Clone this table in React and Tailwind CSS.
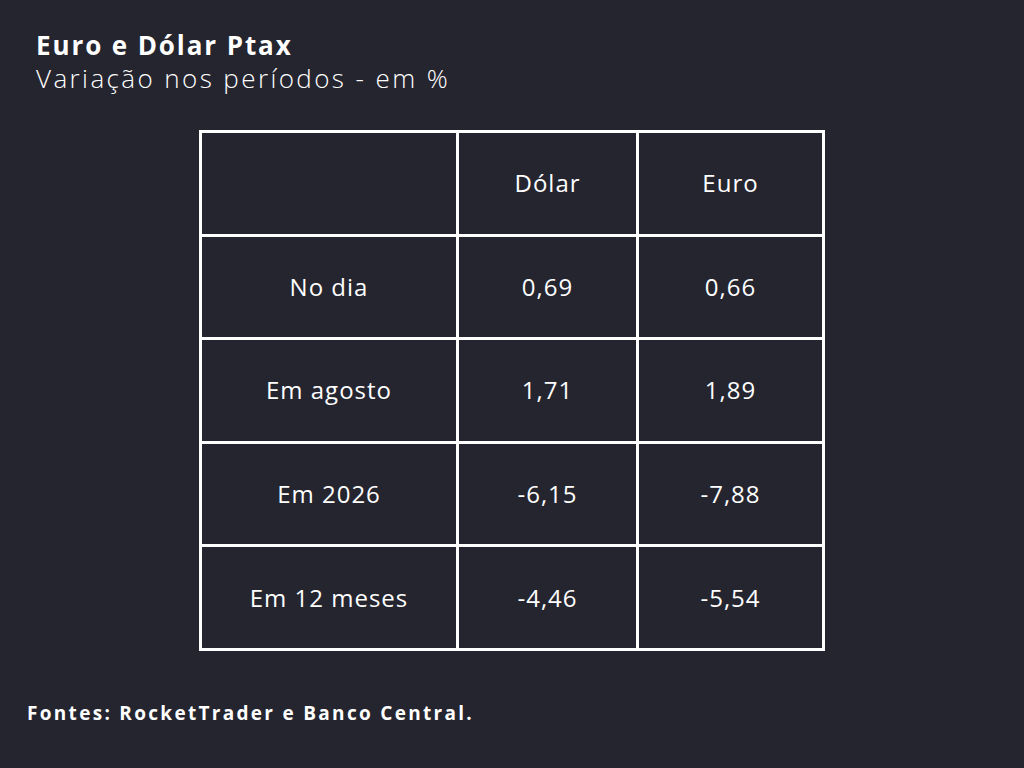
const rows = [
  ["No dia", "0,69", "0,66"],
  ["Em agosto", "1,71", "1,89"],
  ["Em 2026", "-6,15", "-7,88"],
  ["Em 12 meses", "-4,46", "-5,54"],
];

function Cell({ children }) {
  return (
    <div className="bg-[#25252f] flex items-center justify-center text-[24px] font-normal tracking-[1px] text-white">
      {children}
    </div>
  );
}

export default function App() {
  return (
    <div
      className="w-[1024px] h-[768px] bg-[#25252f] text-white flex flex-col"
      style={{ fontFamily: '"Open Sans", "Liberation Sans", sans-serif' }}
    >
      <div className="pl-[36px] pt-[29px]">
        <h1 className="text-[26px] font-bold leading-[32px] tracking-[1.9px]">
          Euro e Dólar Ptax
        </h1>
        <p className="text-[26px] font-light leading-[34px] tracking-[2.4px]">
          Variação nos períodos - em %
        </p>
      </div>
      <div className="pl-[199px] pt-[35px]">
        <div className="w-[626px] h-[521px] bg-white p-[3px] grid grid-cols-[254px_177px_183px] grid-rows-5 gap-[3px]">
          <Cell />
          <Cell>Dólar</Cell>
          <Cell>Euro</Cell>
          {rows.map((r) =>
            r.map((v, i) => <Cell key={r[0] + i}>{v}</Cell>)
          )}
        </div>
      </div>
      <p className="pl-[27px] pt-[49px] text-[19px] font-bold leading-[27px] tracking-[2.3px]">
        Fontes: RocketTrader e Banco Central.
      </p>
    </div>
  );
}
